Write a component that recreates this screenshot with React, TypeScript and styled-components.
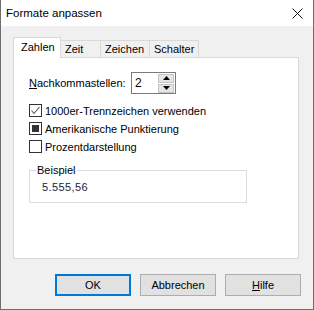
import React from 'react';
import styled, { createGlobalStyle } from 'styled-components';

const GlobalStyle = createGlobalStyle`
  html, body {
    margin: 0;
    padding: 0;
    background: #ffffff;
  }
  body {
    font-family: 'Liberation Sans', Arial, sans-serif;
    font-size: 11px;
    color: #000;
  }
`;

const Window = styled.div`
  width: 314px;
  height: 310px;
  box-sizing: border-box;
  border: 1px solid #6e6e6e;
  border-top: none;
  display: flex;
  flex-direction: column;
  background: #f0f0f0;
`;

const TitleBar = styled.div`
  height: 26px;
  flex: none;
  background: #ffffff;
  display: flex;
  align-items: center;
  justify-content: space-between;
  padding: 0 10px 0 5px;
  font-size: 11.5px;
`;

const CloseButton = styled.div`
  width: 12px;
  height: 12px;
  display: flex;
  align-items: center;
  justify-content: center;
  margin-top: 1px;
`;

const Body = styled.div`
  flex: 1;
  display: flex;
  flex-direction: column;
  padding: 12px 14px 0 12px;
`;

const TabRow = styled.div`
  display: flex;
  align-items: flex-end;
  height: 20px;
  position: relative;
  z-index: 1;
  margin-bottom: -1px;
`;

const Tab = styled.div<{ $active?: boolean; $width: number }>`
  box-sizing: border-box;
  width: ${p => p.$width}px;
  height: ${p => (p.$active ? 21 : 18)}px;
  border: 1px solid #d9d9d9;
  border-bottom: ${p => (p.$active ? 'none' : '1px solid #d9d9d9')};
  background: ${p => (p.$active ? '#ffffff' : '#f0f0f0')};
  margin-left: ${p => (p.$active ? 0 : -1)}px;
  padding-left: ${p => (p.$active ? 7 : 4)}px;
  padding-top: ${p => (p.$active ? 2 : 1)}px;
  line-height: 15px;
  white-space: nowrap;
`;

const Panel = styled.div`
  box-sizing: border-box;
  width: 286px;
  height: 202px;
  background: #ffffff;
  border: 1px solid #d9d9d9;
  padding: 14px 16px 0 15px;
  display: flex;
  flex-direction: column;
`;

const FieldRow = styled.div`
  display: flex;
  align-items: center;
  height: 22px;
`;

const Label = styled.span`
  width: 102px;
  flex: none;
`;

const Key = styled.span`
  text-decoration: underline;
  text-underline-offset: 1px;
`;

const SpinBox = styled.div`
  box-sizing: border-box;
  width: 45px;
  height: 22px;
  border: 1px solid #7a7a7a;
  display: flex;
  align-items: center;
  padding: 1px 1px 1px 3px;
  background: #fff;
  font-size: 12px;
`;

const SpinValue = styled.span`
  flex: 1;
`;

const SpinButtons = styled.div`
  display: flex;
  flex-direction: column;
  gap: 1px;
`;

const SpinButton = styled.div`
  box-sizing: border-box;
  width: 16px;
  height: 9px;
  background: #e5e5e5;
  border: 1px solid #c4c4c4;
  display: flex;
  align-items: center;
  justify-content: center;
`;

const CheckList = styled.div`
  display: flex;
  flex-direction: column;
  gap: 5px;
  margin-top: 10px;
`;

const CheckRow = styled.div`
  display: flex;
  align-items: center;
  gap: 3px;
  height: 13px;
`;

const Box = styled.div`
  box-sizing: border-box;
  width: 13px;
  height: 13px;
  border: 1px solid #333333;
  background: #ffffff;
  display: flex;
  align-items: center;
  justify-content: center;
`;

const Mixed = styled.div`
  width: 7px;
  height: 7px;
  background: #333333;
`;

const Group = styled.fieldset`
  box-sizing: border-box;
  width: 218px;
  height: 39px;
  margin: 11px 0 0 0;
  padding: 0 0 0 12px;
  border: 1px solid #dcdcdc;
`;

const Legend = styled.legend`
  padding: 0 1px;
  margin-left: -6px;
  line-height: 13px;
`;

const Sample = styled.div`
  font-size: 11px;
  letter-spacing: 0.4px;
  color: #1c1c3a;
  margin-top: 4px;
`;

const ButtonRow = styled.div`
  display: flex;
  justify-content: flex-end;
  gap: 9px;
  margin-top: 15px;
  margin-right: -2px;
`;

const Button = styled.div<{ $default?: boolean }>`
  box-sizing: border-box;
  width: 76px;
  height: 22px;
  background: #e1e1e1;
  border: ${p => (p.$default ? '2px solid #0078d7' : '1px solid #adadad')};
  display: flex;
  align-items: center;
  justify-content: center;
`;

const Arrow = ({ up }: { up?: boolean }) => (
  <svg width="7" height="4" viewBox="0 0 7 4">
    <polygon points={up ? '0,4 7,4 3.5,0' : '0,0 7,0 3.5,4'} fill="#000" />
  </svg>
);

const Check = () => (
  <svg width="11" height="11" viewBox="0 0 11 11">
    <polyline points="1.5,5.5 4,8.5 9.5,2" fill="none" stroke="#555" strokeWidth="1.1" />
  </svg>
);

export default function App() {
  return (
    <>
      <GlobalStyle />
      <Window>
        <TitleBar>
          <span>Formate anpassen</span>
          <CloseButton>
            <svg width="11" height="11" viewBox="0 0 11 11">
              <path d="M0.5 0.5 L10.5 10.5 M10.5 0.5 L0.5 10.5" stroke="#111" strokeWidth="1" />
            </svg>
          </CloseButton>
        </TitleBar>
        <Body>
          <TabRow>
            <Tab $active $width={48}>Zahlen</Tab>
            <Tab $width={41}>Zeit</Tab>
            <Tab $width={50}>Zeichen</Tab>
            <Tab $width={50}>Schalter</Tab>
          </TabRow>
          <Panel>
            <FieldRow>
              <Label><Key>N</Key>achkommastellen:</Label>
              <SpinBox>
                <SpinValue>2</SpinValue>
                <SpinButtons>
                  <SpinButton><Arrow up /></SpinButton>
                  <SpinButton><Arrow /></SpinButton>
                </SpinButtons>
              </SpinBox>
            </FieldRow>
            <CheckList>
              <CheckRow>
                <Box><Check /></Box>
                <span>1000er-Trennzeichen verwenden</span>
              </CheckRow>
              <CheckRow>
                <Box><Mixed /></Box>
                <span>Amerikanische Punktierung</span>
              </CheckRow>
              <CheckRow>
                <Box />
                <span>Prozentdarstellung</span>
              </CheckRow>
            </CheckList>
            <Group>
              <Legend>Beispiel</Legend>
              <Sample>5.555,56</Sample>
            </Group>
          </Panel>
          <ButtonRow>
            <Button $default>OK</Button>
            <Button>Abbrechen</Button>
            <Button><Key>H</Key>ilfe</Button>
          </ButtonRow>
        </Body>
      </Window>
    </>
  );
}
